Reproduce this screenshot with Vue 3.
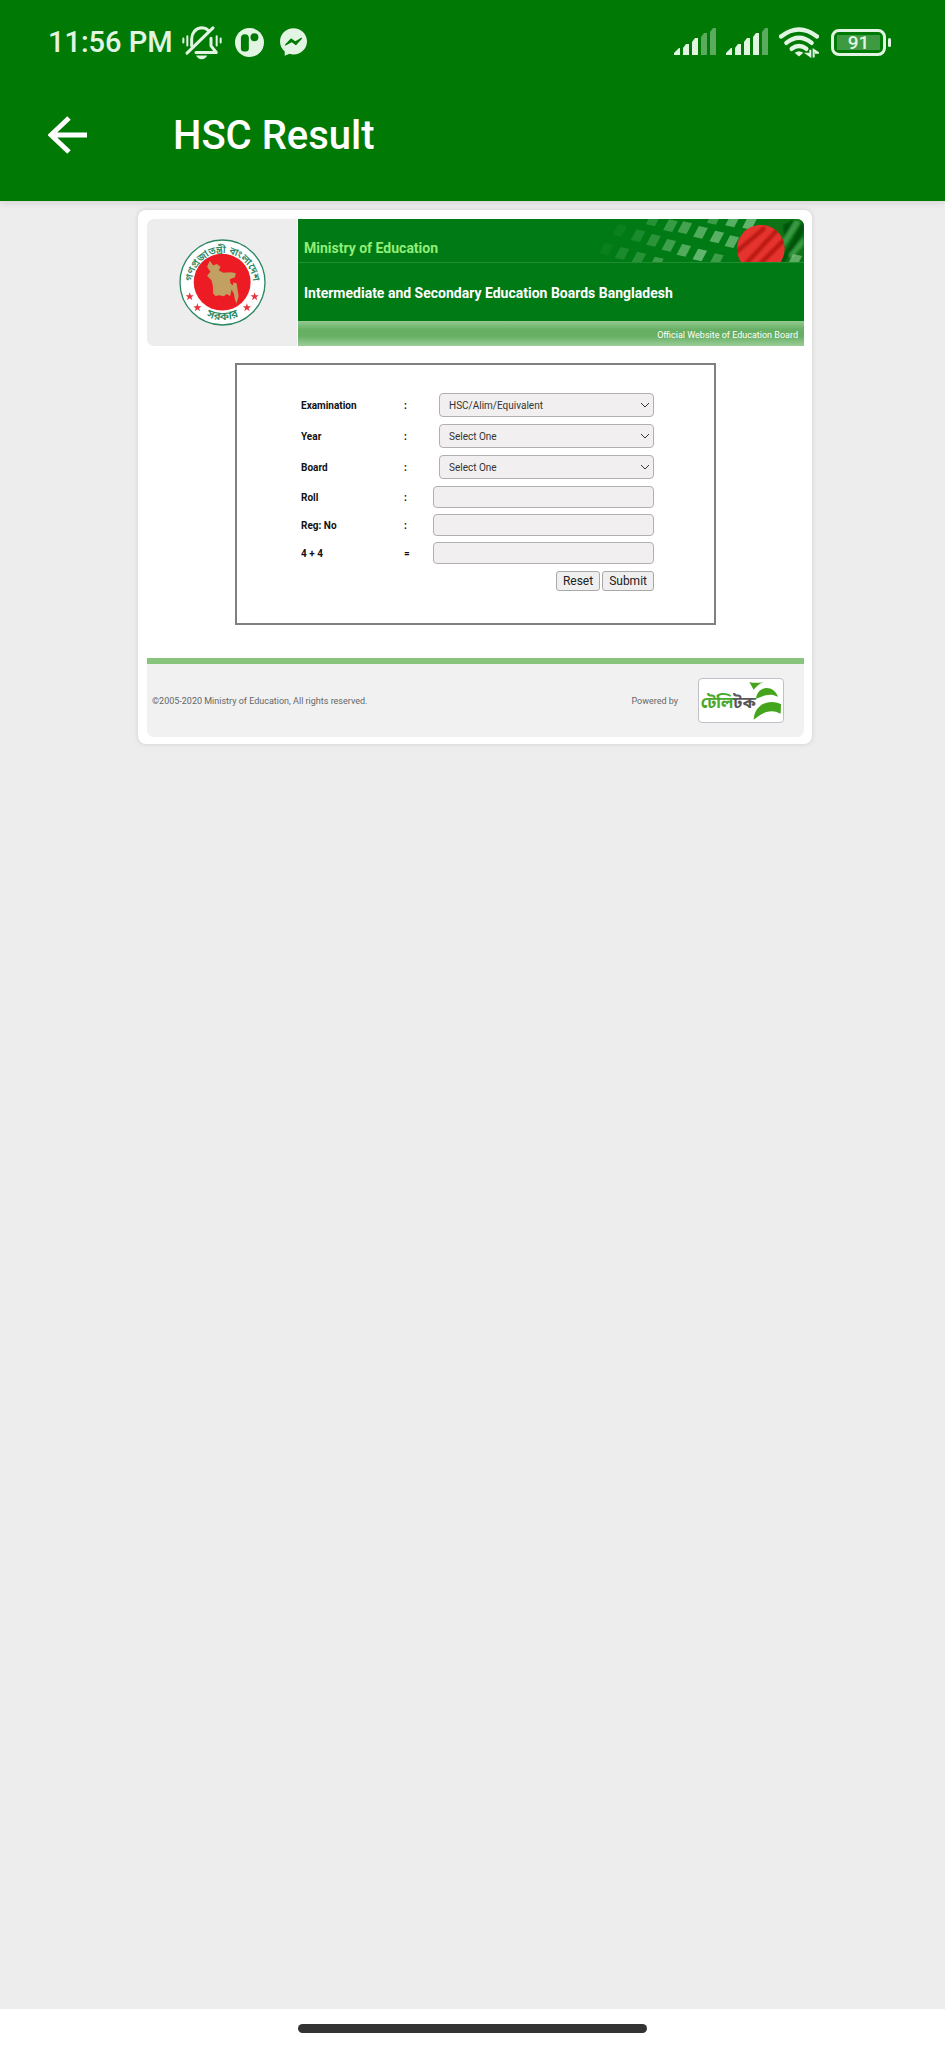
<script setup>
import { reactive } from 'vue'

const blank = () => ({ exam: 'HSC/Alim/Equivalent', year: 'Select One', board: 'Select One', roll: '', reg: '', sum: '' })
const form = reactive(blank())
const reset = () => Object.assign(form, blank())

const selects = [
  { id: 'exam', label: 'Examination' },
  { id: 'year', label: 'Year' },
  { id: 'board', label: 'Board' }
]
const inputs = [
  { id: 'roll', label: 'Roll', mark: ':' },
  { id: 'reg', label: 'Reg: No', mark: ':' },
  { id: 'sum', label: '4 + 4', mark: '=' }
]

const tiles = [
  [340, 45, 0.2], [392, 62, 0.28], [435, 68, 0.35], [482, 82, 0.42], [531, 96, 0.46], [576, 110, 0.45],
  [523, 40, 0.3], [578, 48, 0.45], [629, 55, 0.5],
  [240, 76, 0.06], [295, 92, 0.14], [341, 106, 0.22], [387, 121, 0.32], [432, 136, 0.42], [480, 150, 0.5], [530, 164, 0.3],
  [200, 132, 0.05], [247, 145, 0.14], [297, 159, 0.2], [350, 174, 0.3], [765, 166, 0.45]
]
const stars = [[177, 290], [200, 323], [348, 323], [371, 290]]
const starShape = '0,-13 3,-4 12,-4 5,2 8,11 0,5 -8,11 -5,2 -12,-4 -3,-4'
const signals = [{ id: 'one', lit: 3 }, { id: 'two', lit: 4 }]
const bars = [
  'M0 27V25L5 20H6V27Z', 'M9 27V20L12 16H15V27Z', 'M18 27V14L21 10H24V27Z',
  'M27 27V9L30 5H33V27Z', 'M36 27V4L39 0H42V27Z'
]
</script>

<template>
  <div class="screen">
    <header class="top">
      <div class="status">
        <span class="clock">11:56 PM</span>
        <svg class="bell" viewBox="0 0 120 104" aria-hidden="true">
          <g fill="none" stroke="currentColor" stroke-width="9" stroke-linecap="round">
            <path d="M29 62V42C29 24 40 10 58 8C67 8 74 11 79 16" />
            <path d="M87 39V62L103 82H42" stroke-linejoin="round" />
            <path d="M93 8L15 84" />
            <path d="M4 40v12M16 33v28M104 33v28M116 40v12" stroke-width="6" />
          </g>
          <path d="M42 91H76Q70 102 59 102T42 91Z" fill="currentColor" />
        </svg>
        <svg class="disc" viewBox="0 0 88 88" aria-hidden="true">
          <circle cx="44" cy="44" r="44" fill="currentColor" />
          <path d="M18 31a12 12 0 0 1 24 0v31q0 9-9 9h-6q-9 0-9-9Z" fill="#007a05" />
          <circle cx="59" cy="28" r="12" fill="#007a05" />
        </svg>
        <svg class="chat" viewBox="0 0 80 82" aria-hidden="true">
          <path d="M40 0C62 0 80 17 80 39S62 78 40 78Q33 78 28 76L14 82V69C5 62 0 51 0 39C0 17 18 0 40 0Z" fill="currentColor" />
          <path d="M16 50L33 32L45 41L64 30L47 49L35 40Z" fill="#007a05" stroke="#007a05" stroke-width="3" stroke-linejoin="round" />
        </svg>
        <span class="spacer"></span>
        <svg v-for="s in signals" :key="s.id" class="signal" viewBox="0 0 42 28" aria-hidden="true">
          <path v-for="(d, i) in bars" :key="d" :d="d" fill="currentColor" :opacity="i < s.lit ? 1 : 0.4" />
        </svg>
        <svg class="wifi" viewBox="0 0 120 92" aria-hidden="true">
          <g fill="none" stroke="currentColor" stroke-width="13" stroke-linecap="round">
            <path d="M6 28Q60-14 114 28" />
            <path d="M22 47Q60 16 98 47" />
            <path d="M38 65Q60 48 82 65" />
          </g>
          <path d="M47 77Q60 68 73 77L60 88Z" fill="currentColor" />
          <path d="M94 68V87L84 80H91M104 91V68L117 77H108" fill="none" stroke="currentColor" stroke-width="6" />
        </svg>
        <span class="battery"><span class="cell">91</span></span>
      </div>
      <div class="bar">
        <button class="back" type="button" aria-label="Back">
          <svg viewBox="0 0 39 38" aria-hidden="true">
            <path d="M39 19H4M21 2L3 19L21 36" fill="none" stroke="currentColor" stroke-width="5" />
          </svg>
        </button>
        <h1>HSC Result</h1>
      </div>
    </header>

    <main>
      <section class="card">
        <div class="banner">
          <div class="seal">
            <svg viewBox="145 118 260 260" role="img" aria-label="Government seal">
              <defs>
                <path id="arc-top" d="M184 251A91 91 0 0 1 366 251" />
                <path id="arc-low" d="M163 248A112 112 0 0 0 387 248" />
              </defs>
              <circle cx="275" cy="248" r="127" fill="#fff" stroke="#2c8862" stroke-width="4" />
              <circle cx="274" cy="247" r="85" fill="#ed1c24" />
              <path d="M237 183L247 197L258 193L269 201L264 212L278 219L300 217L315 220L312 232L297 238L299 251L306 257L307 248L317 250L320 270L323 289L317 311L312 299L309 281L302 269L298 288L287 282L279 289L265 286L254 288L247 281L246 257L242 241L229 228L239 216L229 201Z" fill="#c1a062" />
              <g fill="#e8323c">
                <polygon v-for="p in stars" :key="p.join()" :points="starShape" :transform="`translate(${p[0]} ${p[1]})`" />
              </g>
              <g class="ring" text-anchor="middle">
                <text><textPath href="#arc-top" startOffset="50%">গণপ্রজাতন্ত্রী বাংলাদেশ</textPath></text>
                <text class="low"><textPath href="#arc-low" startOffset="50%">সরকার</textPath></text>
              </g>
            </svg>
          </div>
          <div class="titles">
            <div class="ministry">
              <svg class="art" viewBox="100 42 692 129" aria-hidden="true">
                <defs>
                  <clipPath id="ball"><circle cx="663" cy="131" r="72" /></clipPath>
                  <filter id="soft"><feGaussianBlur stdDeviation="3" /></filter>
                </defs>
                <g filter="url(#soft)">
                  <path d="M690 42H792V171H590L640 90Z" fill="#087312" />
                  <path d="M730 60L765 42L735 110ZM792 42V80L735 171H720Z" fill="#00520b" />
                  <path d="M765 45L725 110L735 125L782 52ZM792 95L745 150L755 160L792 120Z" fill="#399a43" />
                </g>
                <polygon v-for="t in tiles" :key="t.join()" points="-5,-19 22,-13 5,19 -22,13" :transform="`translate(${t[0]} ${t[1]})`" fill="#c2efc4" :opacity="t[2]" />
                <g clip-path="url(#ball)">
                  <circle cx="663" cy="131" r="72" fill="#e5342e" />
                  <g filter="url(#soft)" fill="none" stroke="#b3130f" stroke-width="11">
                    <path d="M585 145L675 68M610 185L712 75M648 190L745 92" />
                  </g>
                </g>
              </svg>
              <h2>Ministry of Education</h2>
            </div>
            <div class="boards"><h3>Intermediate and Secondary Education Boards Bangladesh</h3></div>
            <p class="official">Official Website of Education Board</p>
          </div>
        </div>

        <form class="panel" @submit.prevent @reset.prevent="reset">
          <div v-for="s in selects" :key="s.id" class="row">
            <label :for="s.id">{{ s.label }}</label>
            <span class="mark">:</span>
            <div class="pick">
              <select :id="s.id" v-model="form[s.id]"><option>{{ form[s.id] }}</option></select>
              <svg viewBox="0 0 10 6" aria-hidden="true"><path d="M1 1L5 5L9 1" fill="none" stroke="#333" /></svg>
            </div>
          </div>
          <div v-for="f in inputs" :key="f.id" class="row short">
            <label :for="f.id">{{ f.label }}</label>
            <span class="mark">{{ f.mark }}</span>
            <input :id="f.id" v-model="form[f.id]" type="text" />
          </div>
          <div class="actions">
            <button type="reset">Reset</button>
            <button type="submit">Submit</button>
          </div>
        </form>

        <footer>
          <p class="copy">©2005-2020 Ministry of Education, All rights reserved.</p>
          <p>Powered by</p>
          <div class="brand">
            <svg viewBox="0 0 252 128" role="img" aria-label="টেলিটক">
              <text class="word" x="5" y="86"><tspan fill="#4aa82a">টেলি</tspan><tspan fill="#58585a">টক</tspan></text>
              <g fill="#44a51d">
                <path d="M151 9Q174 12 194 9Q177 14 164 32Q158 20 151 9Z" />
                <path d="M171 59C174 20 224 14 237 53C211 39 193 51 171 59Z" />
                <path d="M164 122C166 75 211 57 246 75L245 104C214 87 190 101 164 122Z" />
              </g>
            </svg>
          </div>
        </footer>
      </section>
    </main>
    <nav aria-label="System navigation"><span class="pill"></span></nav>
  </div>
</template>

<style>
body { background: #ededed; }
</style>

<style scoped>
* { box-sizing: border-box; }
h1, h2, h3, p { margin: 0; }
svg { display: block; flex: none; }
.screen {
  min-height: 100vh;
  display: flex;
  flex-direction: column;
  font-family: Roboto, "Noto Sans", sans-serif;
  background: #ededed;
}
.top { height: 201px; background: #007a05; color: #fff; box-shadow: 0 1px 8px #0002; }
.status { display: flex; align-items: center; height: 68px; padding: 16px 59px 0 48px; color: #e2f5e3; }
.clock { font-size: 29px; line-height: 36px; font-weight: 500; width: 134px; white-space: nowrap; }
.bell { width: 40px; height: 35px; }
.disc { width: 29px; height: 29px; margin-left: 13px; }
.chat { width: 27px; height: 28px; margin-left: 16px; }
.spacer { flex: 1; }
.signal { width: 42px; height: 28px; margin-right: 10px; }
.wifi { width: 40px; height: 31px; margin: 0 12px 0 1px; }
.battery {
  position: relative;
  width: 55px;
  height: 27px;
  padding: 3px;
  border: 3px solid currentColor;
  border-radius: 8px;
  flex: none;
}
.battery::after {
  content: "";
  position: absolute;
  right: -8px;
  top: 6px;
  width: 3px;
  height: 9px;
  border-radius: 2px;
  background: currentColor;
}
.cell { display: block; height: 15px; line-height: 16px; background: #3d9a41; font-size: 19px; font-weight: 500; text-align: center; }
.bar { display: flex; align-items: center; height: 133px; padding: 0 48px; }
.back { border: 0; padding: 0; background: none; color: inherit; width: 39px; }
.back svg { width: 39px; height: 38px; }
h1 { margin-left: 86px; padding-top: 2px; font-size: 40px; line-height: 48px; font-weight: 500; }

main { flex: 1; padding: 9px 133px 24px 138px; }
.card { background: #fff; border-radius: 8px; padding: 9px 8px 7px 9px; box-shadow: 0 0 5px #0002; }
.banner { display: flex; gap: 1px; height: 127px; }
.seal { width: 150px; background: #ededed; border-radius: 7px 0 0 7px; display: flex; align-items: center; justify-content: center; flex: none; }
.seal svg { width: 87px; height: 87px; }
.ring { font-family: "Noto Sans Bengali", "Noto Sans", sans-serif; font-size: 30px; font-weight: 600; fill: #2c8862; }
.low { font-size: 34px; }
.titles { flex: 1; display: flex; flex-direction: column; border-radius: 0 7px 0 0; overflow: hidden; background: #007a14; }
.ministry { position: relative; height: 44px; border-bottom: 1px solid #1f8d30; padding: 18px 6px 0; }
.art { position: absolute; right: 0; top: 0; width: 231px; height: 43px; }
h2, h3 { position: relative; font-size: 14px; line-height: 22px; font-weight: 700; }
h2 { color: #90ee78; }
h3 { color: #fff; }
.boards { flex: 1; display: flex; align-items: center; padding: 2px 6px 0; }
.official {
  height: 25px;
  padding: 3px 6px 0;
  font-size: 9px;
  line-height: 22px;
  text-align: right;
  color: #fff;
  background: linear-gradient(#93ca93, #66af63 35%, #66af63 60%, #9bcd99);
}

.panel { margin: 17px 88px 33px; padding: 28px 60px 32px 64px; border: 2px solid #808080; }
.row { display: grid; grid-template-columns: 103px 29px 1fr; align-items: center; height: 24px; margin-bottom: 7px; font-size: 10px; }
.short { height: 22px; margin-bottom: 6px; }
.row label, .mark { font-weight: 700; color: #111; }
.pick { position: relative; margin-left: 6px; }
.pick svg { position: absolute; right: 4px; top: 9px; width: 10px; height: 6px; pointer-events: none; }
select, input { display: block; width: 100%; border: 1px solid #b3aeb0; border-radius: 4px; background: #f2eff0; color: #333; font: inherit; }
select { height: 24px; padding: 0 9px; appearance: none; }
input { height: 22px; padding: 0 6px; }
.actions { display: flex; justify-content: flex-end; gap: 2px; padding-top: 1px; }
.actions button { height: 20px; padding: 0 6px; border: 1px solid #a9a9a9; border-radius: 3px; background: #efefef; color: #222; font: 12px/18px Roboto, sans-serif; }

footer { display: flex; align-items: center; height: 79px; padding: 0 20px 0 5px; border-top: 6px solid #89c47c; border-radius: 0 0 7px 7px; background: #f1f1f1; font-size: 9px; color: #666; }
.copy { flex: 1; }
.brand { width: 86px; height: 45px; margin-left: 20px; border: 1px solid #bfc0c8; border-radius: 4px; background: #fff; overflow: hidden; }
.brand svg { width: 84px; height: 43px; }
.word { font-family: "Noto Sans Bengali", "Noto Sans", sans-serif; font-size: 49px; font-weight: 700; }

nav { height: 39px; background: #fff; display: flex; justify-content: center; padding-top: 15px; }
.pill { width: 37%; height: 9px; border-radius: 5px; background: #333; }
</style>
